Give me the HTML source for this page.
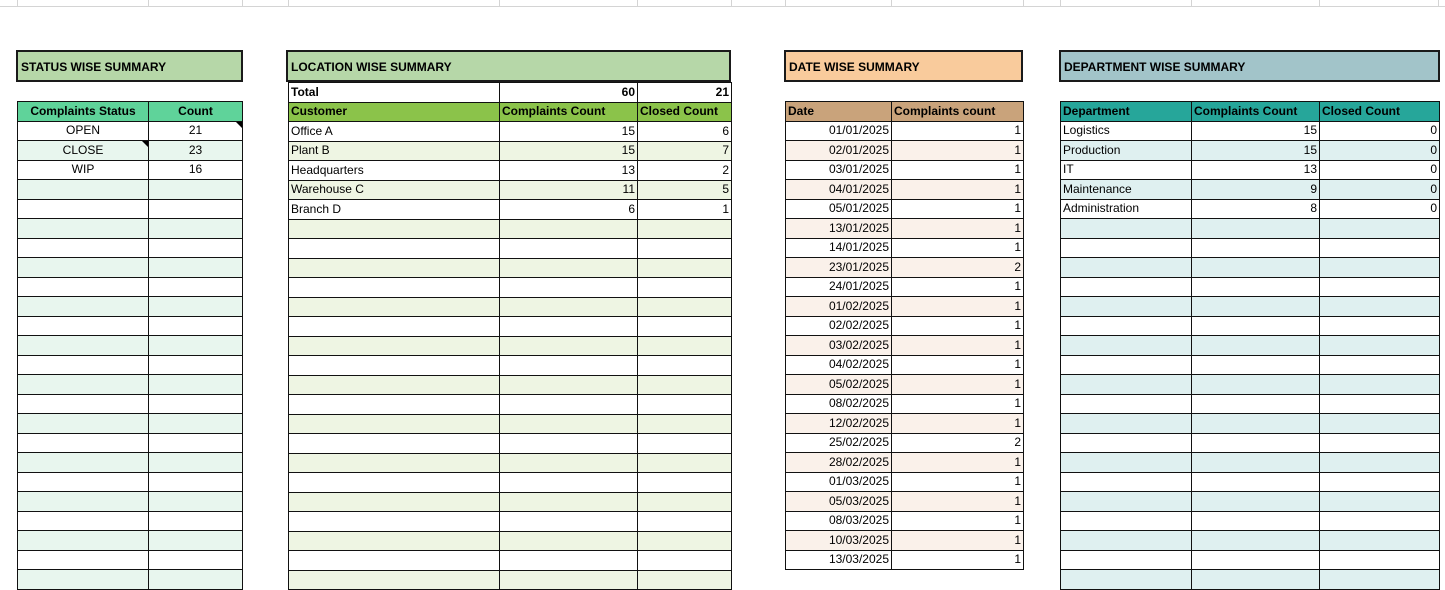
<!DOCTYPE html>
<html><head><meta charset="utf-8"><style>
body{margin:0;width:1445px;height:570px;overflow:hidden;background:#fff;font-family:"Liberation Sans",Arial,sans-serif;font-size:12px;color:#000;position:relative}
.grid{position:absolute;top:0;left:0;width:1445px;height:6px;border-bottom:1px solid #d4d4d4}
.vl{position:absolute;top:0;height:6px;width:1px;background:#d4d4d4}
.title{position:absolute;top:50px;height:28px;border:2px solid #1a1a1a;box-sizing:content-box;font-weight:bold;font-size:12px;line-height:30px;padding-left:3px}
table{position:absolute;border-collapse:collapse;table-layout:fixed}
td{border:1px solid #111;height:18.5px;padding:0 2px;line-height:17px;white-space:nowrap;overflow:hidden}
tr{height:19.5px}
.r{text-align:right}.c{text-align:center}.b{font-weight:bold}
.st tr:nth-child(odd):not(.h) td{background:#e8f6ee}
.lo tr:nth-child(even):not(.h):not(.t) td{background:#eef5e3}
.dt tr:nth-child(odd):not(.h) td{background:#faf1ea}
.dp tr:nth-child(odd):not(.h) td{background:#dff0f0}
.tri{position:relative}
.tri:after{content:"";position:absolute;right:0;top:0;border-top:6px solid #000;border-left:6px solid transparent}
</style></head><body>
<div class="grid"></div>
<div class="vl" style="left:17px"></div><div class="vl" style="left:148px"></div><div class="vl" style="left:242px"></div><div class="vl" style="left:288px"></div><div class="vl" style="left:499px"></div><div class="vl" style="left:637px"></div><div class="vl" style="left:731px"></div><div class="vl" style="left:785px"></div><div class="vl" style="left:891px"></div><div class="vl" style="left:1023px"></div><div class="vl" style="left:1060px"></div><div class="vl" style="left:1191px"></div><div class="vl" style="left:1319px"></div><div class="vl" style="left:1438px"></div>

<div class="title" style="left:16px;width:220px;background:#b6d7a8">STATUS WISE SUMMARY</div>
<div class="title" style="left:286px;width:438px;background:#b6d7a8">LOCATION WISE SUMMARY</div>
<div class="title" style="left:784px;width:232px;background:#f9cb9c">DATE WISE SUMMARY</div>
<div class="title" style="left:1059px;width:374px;background:#a2c4c9">DEPARTMENT WISE SUMMARY</div>

<table class="st" id="st" style="left:17px;top:101px;width:225px">
<colgroup><col style="width:131px"><col style="width:94px"></colgroup>
<tr class="h"><td class="c b" style="background:#5fd39a">Complaints Status</td><td class="c b" style="background:#5fd39a">Count</td></tr>
<tr><td class="c">OPEN</td><td class="c tri">21</td></tr>
<tr><td class="c tri">CLOSE</td><td class="c">23</td></tr>
<tr><td class="c">WIP</td><td class="c">16</td></tr>
</table>

<table class="lo" id="lo" style="left:288px;top:82px;width:443px">
<colgroup><col style="width:211px"><col style="width:138px"><col style="width:94px"></colgroup>
<tr class="t"><td class="b">Total</td><td class="r b">60</td><td class="r b">21</td></tr>
<tr class="h"><td class="b" style="background:#8bc34a">Customer</td><td class="b" style="background:#8bc34a">Complaints Count</td><td class="b" style="background:#8bc34a">Closed Count</td></tr>
<tr><td>Office A</td><td class="r">15</td><td class="r">6</td></tr>
<tr><td>Plant B</td><td class="r">15</td><td class="r">7</td></tr>
<tr><td>Headquarters</td><td class="r">13</td><td class="r">2</td></tr>
<tr><td>Warehouse C</td><td class="r">11</td><td class="r">5</td></tr>
<tr><td>Branch D</td><td class="r">6</td><td class="r">1</td></tr>
</table>

<table class="dt" id="dt" style="left:785px;top:101px;width:238px">
<colgroup><col style="width:106px"><col style="width:132px"></colgroup>
<tr class="h"><td class="b" style="background:#c9a37b">Date</td><td class="b" style="background:#c9a37b">Complaints count</td></tr>
<tr><td class="r">01/01/2025</td><td class="r">1</td></tr>
<tr><td class="r">02/01/2025</td><td class="r">1</td></tr>
<tr><td class="r">03/01/2025</td><td class="r">1</td></tr>
<tr><td class="r">04/01/2025</td><td class="r">1</td></tr>
<tr><td class="r">05/01/2025</td><td class="r">1</td></tr>
<tr><td class="r">13/01/2025</td><td class="r">1</td></tr>
<tr><td class="r">14/01/2025</td><td class="r">1</td></tr>
<tr><td class="r">23/01/2025</td><td class="r">2</td></tr>
<tr><td class="r">24/01/2025</td><td class="r">1</td></tr>
<tr><td class="r">01/02/2025</td><td class="r">1</td></tr>
<tr><td class="r">02/02/2025</td><td class="r">1</td></tr>
<tr><td class="r">03/02/2025</td><td class="r">1</td></tr>
<tr><td class="r">04/02/2025</td><td class="r">1</td></tr>
<tr><td class="r">05/02/2025</td><td class="r">1</td></tr>
<tr><td class="r">08/02/2025</td><td class="r">1</td></tr>
<tr><td class="r">12/02/2025</td><td class="r">1</td></tr>
<tr><td class="r">25/02/2025</td><td class="r">2</td></tr>
<tr><td class="r">28/02/2025</td><td class="r">1</td></tr>
<tr><td class="r">01/03/2025</td><td class="r">1</td></tr>
<tr><td class="r">05/03/2025</td><td class="r">1</td></tr>
<tr><td class="r">08/03/2025</td><td class="r">1</td></tr>
<tr><td class="r">10/03/2025</td><td class="r">1</td></tr>
<tr><td class="r">13/03/2025</td><td class="r">1</td></tr>
</table>

<table class="dp" id="dp" style="left:1060px;top:101px;width:379px">
<colgroup><col style="width:131px"><col style="width:128px"><col style="width:120px"></colgroup>
<tr class="h"><td class="b" style="background:#26a69a">Department</td><td class="b" style="background:#26a69a">Complaints Count</td><td class="b" style="background:#26a69a">Closed Count</td></tr>
<tr><td>Logistics</td><td class="r">15</td><td class="r">0</td></tr>
<tr><td>Production</td><td class="r">15</td><td class="r">0</td></tr>
<tr><td>IT</td><td class="r">13</td><td class="r">0</td></tr>
<tr><td>Maintenance</td><td class="r">9</td><td class="r">0</td></tr>
<tr><td>Administration</td><td class="r">8</td><td class="r">0</td></tr>
</table>
<script>
function pad(id,cols,total){var t=document.getElementById(id);while(t.rows.length<total){var r=t.insertRow();for(var i=0;i<cols;i++){r.insertCell().innerHTML="&nbsp;";}}}
pad("st",2,25);pad("lo",3,26);pad("dp",3,25);
</script>
</body></html>
